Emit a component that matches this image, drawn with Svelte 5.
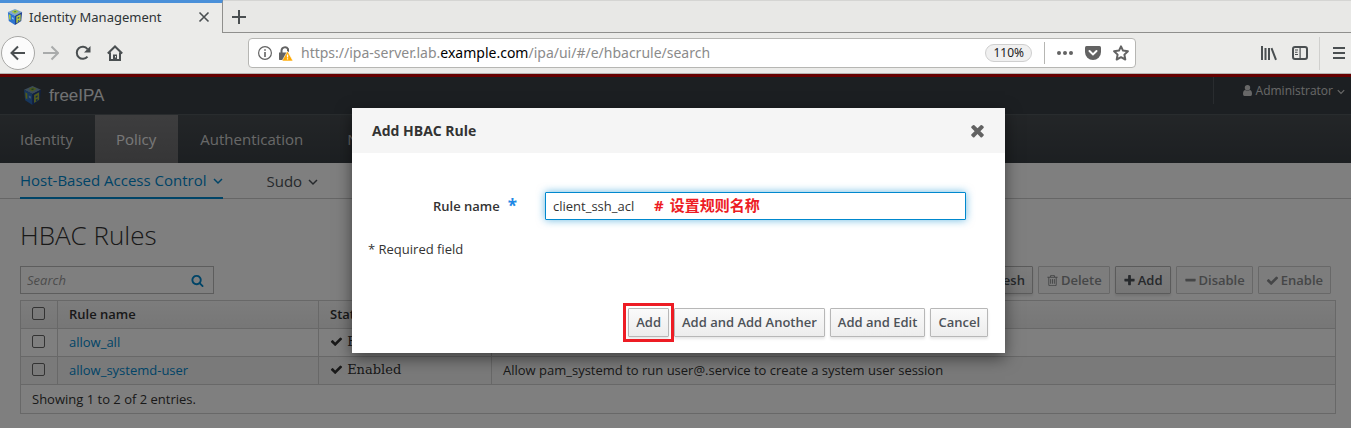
<script>
  const paths = {
    check: 'M1671 566q0 40-28 68l-724 724-136 136q-28 28-68 28t-68-28l-136-136-362-362q-28-28-28-68t28-68l136-136q28-28 68-28t68 28l294 295 656-657q28-28 68-28t68 28l136 136q28 28 28 68z',
    times: 'M1490 1322q0 40-28 68l-136 136q-28 28-68 28t-68-28l-294-294-294 294q-28 28-68 28t-68-28l-136-136q-28-28-28-68t28-68l294-294-294-294q-28-28-28-68t28-68l136-136q28-28 68-28t68 28l294 294 294-294q28-28 68-28t68 28l136 136q28 28 28 68t-28 68l-294 294 294 294q28 28 28 68z',
    plus: 'M1600 736v192q0 40-28 68t-68 28h-416v416q0 40-28 68t-68 28h-192q-40 0-68-28t-28-68v-416h-416q-40 0-68-28t-28-68v-192q0-40 28-68t68-28h416v-416q0-40 28-68t68-28h192q40 0 68 28t28 68v416h416q40 0 68 28t28 68z',
    minus: 'M1600 736v192q0 40-28 68t-68 28h-1216q-40 0-68-28t-28-68v-192q0-40 28-68t68-28h1216q40 0 68 28t28 68z',
    trash: 'M704 736v576q0 14-9 23t-23 9h-64q-14 0-23-9t-9-23v-576q0-14 9-23t23-9h64q14 0 23 9t9 23zm256 0v576q0 14-9 23t-23 9h-64q-14 0-23-9t-9-23v-576q0-14 9-23t23-9h64q14 0 23 9t9 23zm256 0v576q0 14-9 23t-23 9h-64q-14 0-23-9t-9-23v-576q0-14 9-23t23-9h64q14 0 23 9t9 23zm128 724v-948h-896v948q0 22 7 40.5t14.5 27 10.5 8.5h832q3 0 10.5-8.5t14.5-27 7-40.5zm-672-1076h448l-48-117q-7-9-17-11h-317q-10 2-17 11zm928 32v64q0 14-9 23t-23 9h-96v948q0 83-47 143.5t-113 60.5h-832q-66 0-113-58.5t-47-141.5v-952h-96q-14 0-23-9t-9-23v-64q0-14 9-23t23-9h309l70-167q15-37 54-63t79-26h320q40 0 79 26t54 63l70 167h309q14 0 23 9t9 23z',
    search: 'M1216 832q0-185-131.5-316.5t-316.5-131.5-316.5 131.5-131.5 316.5 131.5 316.5 316.5 131.5 316.5-131.5 131.5-316.5zm512 832q0 52-38 90t-90 38q-54 0-90-38l-343-342q-179 124-399 124-143 0-273.5-55.5t-225-150-150-225-55.5-273.5 55.5-273.5 150-225 225-150 273.5-55.5 273.5 55.5 225 150 150 225 55.5 273.5q0 220-124 399l343 343q37 37 37 90z'
  };

  const tabs = [
    { label: 'Identity' },
    { label: 'Policy', active: true },
    { label: 'Authentication' },
    { label: 'Network Services' }
  ];

  const actions = [
    { label: 'Refresh' },
    { label: 'Delete', icon: 'trash', disabled: true },
    { label: 'Add', icon: 'plus' },
    { label: 'Disable', icon: 'minus', disabled: true },
    { label: 'Enable', icon: 'check', disabled: true }
  ];

  const rules = [
    { name: 'allow_all', description: 'Allow all users to access any host from any host' },
    {
      name: 'allow_systemd-user',
      description: 'Allow pam_systemd to run user@.service to create a system user session'
    }
  ];

  let ruleName = $state('client_ssh_acl');
</script>

{#snippet icon(name)}
  <svg class="fa" viewBox="0 0 1792 1792" aria-hidden="true"><path d={paths[name]} /></svg>
{/snippet}

{#snippet chevron()}
  <svg class="chevron" viewBox="0 0 10 10" aria-hidden="true"><path d="M1 4l4 4 4-4" /></svg>
{/snippet}

{#snippet cube()}
  <svg class="cube" viewBox="0 0 18 18" aria-hidden="true">
    <path d="M9 0l8 3.500-8 4-8-4z" fill="#7fa6c9" />
    <path d="M1 3.500l8 4V18l-7-4.500z" fill="#2d74cf" />
    <path d="M17 3.500l-8 4V18l7-4.500z" fill="#1c3f94" />
    <path d="M5.500 2.600l4-1.400 3.500 1.500-4 2.600-2.200-1z" fill="#a9c93a" />
    <path d="M7.500 2.900l2-.6 1.200.6-1.900 1.100z" fill="#3a7a60" />
    <path d="M2.200 6l1.900 1v5.500l-1.500-.9z" fill="#b9cf2e" />
    <path d="M5.500 9l2 1v2l-2-1z" fill="#8cc1ee" />
    <path d="M10.500 8.500l4.800-2.500v7L10.500 16z" fill="#b5cc3c" />
    <path d="M12 9.700l1.800-.9v1.600l-1.800.9zM12.200 12.900l1.600-.8v1.700l-1.600.8z" fill="#24509e" />
  </svg>
{/snippet}

<div class="browser">
  <div class="tabstrip">
    <div class="tab">
      {@render cube()}
      <span class="tab-title">Identity Management</span>
      <button class="plain" aria-label="Close tab">
        <svg width="12" height="12" viewBox="0 0 12 12"><path class="line thin" d="M1.500 1.500l9 9M10.500 1.500l-9 9" /></svg>
      </button>
    </div>
    <div class="strip-rest">
      <button class="plain" aria-label="New tab">
        <svg width="14" height="14" viewBox="0 0 14 14"><path class="line" d="M7 0v14M0 7h14" /></svg>
      </button>
    </div>
  </div>

  <div class="toolbar">
    <div class="nav-buttons">
      <button class="plain back" aria-label="Back">
        <svg width="16" height="16" viewBox="0 0 16 16"><path class="line" d="M15 8H1.500M8 1.500L1.500 8 8 14.500" /></svg>
      </button>
      <button class="plain faded" aria-label="Forward">
        <svg width="16" height="16" viewBox="0 0 16 16"><path class="line" d="M0 8h14.500M8.500 1.500L15 8l-6.500 6.500" /></svg>
      </button>
      <button class="plain" aria-label="Reload">
        <svg width="16" height="16" viewBox="0 0 16 16">
          <path class="line" d="M12.500 11.500A6 6 0 1 1 12.500 4" />
          <path d="M15.500 1v6.500H9z" />
        </svg>
      </button>
      <button class="plain" aria-label="Home">
        <svg width="16" height="16" viewBox="0 0 16 16">
          <path class="line" d="M.8 8.500L8 1.500l7.200 7M3 7.500V15h10V7.500" />
          <path d="M6 9.500h4V15H6z" />
          <path d="M8 11h1v1.500H8z" fill="#ebebe9" />
        </svg>
      </button>
    </div>

    <div class="urlbar">
      <svg width="14" height="14" viewBox="0 0 14 14" aria-hidden="true">
        <circle cx="7" cy="7" r="6.400" fill="none" stroke="#636363" stroke-width="1.200" />
        <path d="M6.200 6h1.600v5H6.200zM6.200 3.200h1.600v1.600H6.200z" />
      </svg>
      <svg class="lock" width="15" height="15" viewBox="0 0 15 15" aria-hidden="true">
        <path d="M3.500 7V4.500a3.500 3.500 0 0 1 6.500-1.500V6" fill="none" stroke="#636363" stroke-width="2" />
        <path d="M1 6.500h9V14H1.500L1 13.500z" />
        <path d="M9.500 5L15 15H4z" fill="#ffa900" stroke="#fff" stroke-width=".6" />
        <path d="M8.900 8.500h1.300v3H8.900zM8.900 12.300h1.300v1.300H8.900z" fill="#fff" />
      </svg>
      <div class="address" role="textbox" tabindex="0" aria-label="Address" contenteditable="true">https://ipa-server.lab.<b>example.com</b>/ipa/ui/#/e/hbacrule/search</div>
      <button class="zoom">110%</button>
      <span class="divider"></span>
      <button class="plain grey" aria-label="Page actions">
        <svg width="16" height="16" viewBox="0 0 16 16"><circle cx="2" cy="8" r="2" /><circle cx="8" cy="8" r="2" /><circle cx="14" cy="8" r="2" /></svg>
      </button>
      <button class="plain grey" aria-label="Save to Pocket">
        <svg width="16" height="16" viewBox="0 0 16 16">
          <path d="M1.500 1h13Q16 1 16 2.500V7a8 8 0 0 1-16 0V2.500Q0 1 1.500 1z" />
          <path d="M4.500 6L8 9.400 11.500 6" fill="none" stroke="#fff" stroke-width="2" stroke-linecap="round" />
        </svg>
      </button>
      <button class="plain grey" aria-label="Bookmark">
        <svg width="16" height="16" viewBox="0 0 16 16"><path class="line" d="M8 1.300l2 4.300 4.900.6-3.500 3.400.9 4.900L8 12.200l-4.300 2.300.9-4.900L1.100 6.200 6 5.600z" stroke-linejoin="round" /></svg>
      </button>
    </div>

    <div class="tools">
      <button class="plain" aria-label="Library">
        <svg width="16" height="16" viewBox="0 0 16 16"><path class="line" d="M1 1v14M4.500 3v12M8 3v12M10.500 3.200L15 14.800" /></svg>
      </button>
      <button class="plain" aria-label="Sidebars">
        <svg width="16" height="16" viewBox="0 0 16 16">
          <rect class="line" x="1" y="2" width="14" height="12" rx="2" />
          <path d="M7.500 2h1.200v12H7.500zM3 4.500h3v1H3zM3 6.800h2.500v1H3zM3 9h3v1H3z" />
        </svg>
      </button>
      <span class="divider tall"></span>
      <button class="plain" aria-label="Menu">
        <svg width="12" height="12" viewBox="0 0 12 12"><path class="line" d="M0 1h12M0 6h12M0 11h12" /></svg>
      </button>
    </div>
  </div>

  <div class="page">
    <header>
      <a class="brand" href="#/">{@render cube()}<span>freeIPA</span></a>
      <button class="plain user">
        <svg width="9" height="11" viewBox="0 0 9 11" aria-hidden="true"><circle cx="4.500" cy="2.700" r="2.700" /><path d="M2 5q2.500 1.600 5 0 2 .6 2 4 0 2-1.500 2h-6Q0 11 0 9q0-3.400 2-4z" /></svg>
        <span>Administrator</span>
        {@render chevron()}
      </button>
    </header>

    <nav class="primary">
      {#each tabs as tab}
        <a href="#/" class:active={tab.active}>{tab.label}</a>
      {/each}
    </nav>

    <nav class="secondary">
      <a href="#/" class="active">Host-Based Access Control {@render chevron()}</a>
      <a href="#/">Sudo {@render chevron()}</a>
    </nav>

    <main>
      <h1>HBAC Rules</h1>
      <div class="controls">
        <div class="search">
          <input type="text" placeholder="Search" aria-label="Search" />
          <button class="plain" aria-label="Find">{@render icon('search')}</button>
        </div>
        <div class="actions">
          {#each actions as action}
            <button class="btn" disabled={action.disabled}>
              {#if action.icon}{@render icon(action.icon)}{/if}<span>{action.label}</span>
            </button>
          {/each}
        </div>
      </div>

      <table>
        <thead>
          <tr>
            <th class="pick"><input type="checkbox" aria-label="Select all" /></th>
            <th class="name">Rule name</th>
            <th class="status">Status</th>
            <th>Description</th>
          </tr>
        </thead>
        <tbody>
          {#each rules as rule}
            <tr>
              <td><input type="checkbox" aria-label={rule.name} /></td>
              <td><a href="#/">{rule.name}</a></td>
              <td class="enabled">{@render icon('check')} Enabled</td>
              <td>{rule.description}</td>
            </tr>
          {/each}
        </tbody>
        <tfoot>
          <tr><td colspan="4">Showing 1 to 2 of 2 entries.</td></tr>
        </tfoot>
      </table>
    </main>

    <div class="backdrop">
      <div class="modal" role="dialog" aria-labelledby="dialog-title">
        <div class="modal-header">
          <h2 id="dialog-title">Add HBAC Rule</h2>
          <button class="plain close" aria-label="Close">{@render icon('times')}</button>
        </div>
        <div class="modal-body">
          <div class="field">
            <label for="rule-name">Rule name <span class="star">*</span></label>
            <div class="entry">
              <input id="rule-name" type="text" bind:value={ruleName} />
              <span class="note"><span>#</span><span>设置规则名称</span></span>
            </div>
          </div>
          <p>* Required field</p>
        </div>
        <div class="modal-footer">
          <button class="btn marked">Add</button>
          <button class="btn">Add and Add Another</button>
          <button class="btn">Add and Edit</button>
          <button class="btn">Cancel</button>
        </div>
      </div>
    </div>
  </div>
</div>

<style>
  :global(body) { background: #808080; }
  * { box-sizing: border-box; }

  .browser {
    display: flex;
    flex-direction: column;
    min-height: 100vh;
    font: 13px/18px "Open Sans", "Noto Sans CJK SC", sans-serif;
    color: #333;
  }
  svg { display: block; flex: none; }
  a { text-decoration: none; }
  button, input { font: inherit; color: inherit; margin: 0; }
  .plain {
    display: flex;
    align-items: center;
    justify-content: center;
    border: 0;
    padding: 0;
    background: none;
    fill: #4a4f51;
    stroke: none;
  }
  .line { fill: none; stroke: #4a4f51; stroke-width: 2; }
  .thin { stroke-width: 1.6; }
  .fa { width: 13px; height: 13px; fill: currentColor; }
  .chevron { width: 10px; height: 10px; fill: none; stroke: currentColor; stroke-width: 1.5; }

  /* Browser chrome */
  .tabstrip { display: flex; height: 33px; font: 13px/20px "Noto Sans", sans-serif; color: #2e3436; }
  .tab {
    display: flex;
    align-items: center;
    width: 223px;
    padding: 0 12px 2px 7px;
    border-top: 3px solid #4a90d9;
    border-right: 1px solid #8f8f8d;
    background: #ebebe9;
  }
  .tab .cube { width: 16px; height: 16px; }
  .tab-title { flex: 1; padding-left: 6px; white-space: nowrap; }
  .strip-rest {
    display: flex;
    flex: 1;
    padding-left: 9px;
    border-top: 1px solid #d5d5d3;
    border-bottom: 1px solid #8f8f8d;
    background: #e8e8e6;
  }
  .toolbar {
    display: flex;
    align-items: center;
    height: 41px;
    padding: 0 6px 0 1px;
    border-bottom: 1px solid #b4b4b2;
    background: #ebebe9;
  }
  .nav-buttons { display: flex; align-items: center; gap: 16px; }
  .back {
    width: 34px;
    height: 34px;
    margin-right: -8px;
    border: 1px solid #a8a8a6;
    border-radius: 50%;
    background: #fbfbfb;
  }
  .faded .line { stroke: #a9abab; }
  .urlbar {
    display: flex;
    flex: 1;
    align-items: center;
    height: 30px;
    margin: 0 9.3%;
    padding: 0 6px 0 9px;
    border: 1px solid #b6b6b3;
    border-radius: 4px;
    background: #fff;
    fill: #636363;
    font: 14px/20px "Noto Sans", sans-serif;
    color: #8b8b8b;
  }
  .lock { margin: 0 8px 0 6px; }
  .address { flex: 1; white-space: nowrap; overflow: hidden; }
  .address b { font-weight: 400; color: #000; }
  .zoom {
    height: 18px;
    padding: 0 7px;
    border: 1px solid #cfcfcf;
    border-radius: 9px;
    background: #f0f0f0;
    font-size: 12px;
    line-height: 16px;
    color: #222;
  }
  .divider { width: 1px; height: 22px; margin: 0 0 0 12px; background: #b6b6b3; }
  .grey { margin-left: 12px; fill: #636363; }
  .grey .line { stroke: #636363; }
  .tools { display: flex; align-items: center; gap: 15px; }
  .divider.tall { height: 33px; margin: 0 -2px 0 -4px; background: #d0d0ce; }

  /* Page */
  .page {
    position: relative;
    flex: 1;
    border-top: 3px solid #c00;
    background: #fff;
  }
  header { display: flex; align-items: flex-start; justify-content: space-between; height: 37px; background: #393f44; }
  .brand {
    display: flex;
    align-items: center;
    gap: 7px;
    height: 37px;
    padding-left: 23px;
    font: 17px/20px "Liberation Sans", sans-serif;
    color: #e2e4e6;
  }
  .brand .cube { width: 19px; height: 19px; opacity: .85; }
  .user { gap: 4px; height: 27px; padding: 0 6px 0 29px; border-left: 1px solid #53595e; color: #d1d1d1; fill: #d1d1d1; font-size: 12px; }
  .user .chevron { width: 8px; height: 8px; }
  .primary { display: flex; height: 49px; border-top: 1px solid #53585c; background: linear-gradient(#474c50, #393f44); font-size: 15px; }
  .primary a { padding: 0 22px; line-height: 49px; white-space: nowrap; color: #d1d1d1; }
  .primary a:first-child { padding-left: 20px; }
  .primary .active { padding-left: 21px; background: linear-gradient(#7b7b7d, #6c6c6e); color: #f1f1f1; }
  .secondary { display: flex; gap: 44px; height: 36px; padding: 0 20px; border-bottom: 1px solid #ccc; background: #fff; font-size: 15px; }
  .secondary a { display: flex; align-items: center; gap: 6px; height: 36px; color: #4d5258; }
  .secondary .active { border-bottom: 2px solid #0088ce; color: #0088ce; }
  main { padding: 19px 15px 14px 20px; }
  h1 { margin: 0 0 14px; font-size: 26px; line-height: 34px; font-weight: 300; }
  .controls { display: flex; justify-content: space-between; margin-bottom: 6px; }
  .search { display: flex; width: 194px; height: 28px; padding: 0 9px 0 6px; border: 1px solid #bbb; }
  .search input { flex: 1; min-width: 0; padding: 0; border: 0; background: none; outline: 0; }
  .search input::placeholder { font-style: italic; color: #999; opacity: 1; }
  .search button { color: #0088ce; }
  .actions { display: flex; gap: 5px; padding-right: 5px; }
  .btn {
    display: flex;
    align-items: center;
    gap: 2px;
    height: 28px;
    padding: 0 7px;
    border: 1px solid #b7b7b7;
    border-radius: 1px;
    background: linear-gradient(#fafafa, #ededed);
    box-shadow: 0 2px 3px rgba(3, 3, 3, .1);
    font-weight: 600;
    white-space: nowrap;
    color: #4d5258;
  }
  .btn:disabled { border-color: #d1d1d1; background: #fafafa; box-shadow: none; color: #8b8d8f; }

  table { width: 100%; border-collapse: collapse; table-layout: fixed; }
  th, td { height: 28px; padding: 0 11px 2px; border: 1px solid #d1d1d1; text-align: left; }
  th { font-weight: 600; }
  thead { background: linear-gradient(#fafafa, #ededed); }
  .pick { width: 37px; }
  .name { width: 261px; }
  .status { width: 173px; }
  tbody tr:nth-child(2) { background: #f5f5f5; }
  td a { color: #0088ce; }
  .enabled { font-family: "DejaVu Serif", serif; }
  .enabled .fa { display: inline-block; vertical-align: -2px; }
  tfoot td { height: 29px; padding-bottom: 0; }
  input[type='checkbox'] {
    display: block;
    width: 13px;
    height: 13px;
    appearance: none;
    border: 1px solid #666;
    border-radius: 2px;
  }

  /* Dialog */
  .backdrop {
    position: absolute;
    inset: -3px 0 0;
    display: flex;
    align-items: flex-start;
    justify-content: center;
    padding: 34px 0 0 6px;
    background: rgba(0, 0, 0, .5);
  }
  .modal { width: 653px; background: #fff; box-shadow: 0 5px 15px rgba(0, 0, 0, .5); }
  .modal-header { display: flex; align-items: center; justify-content: space-between; height: 45px; padding: 0 18px 0 20px; background: #f5f5f5; }
  h2 { margin: 0; font-size: 14px; line-height: 20px; font-weight: 700; }
  .close { color: #626262; }
  .close .fa { width: 19px; height: 19px; }
  .modal-body { padding: 39px 39px 0 16px; }
  .field { display: flex; align-items: center; gap: 28px; }
  .field label { display: flex; flex: 1; justify-content: flex-end; gap: 8px; font-weight: 600; }
  .star { font-size: 17px; font-weight: 700; color: #1e88e5; }
  .entry { position: relative; width: 421px; }
  .entry input {
    display: block;
    width: 100%;
    height: 28px;
    padding: 0 7px;
    border: 1px solid #0088ce;
    border-radius: 1px;
    outline: 0;
    box-shadow: 0 0 8px rgba(0, 136, 206, .6);
  }
  .note {
    position: absolute;
    top: 4px;
    left: 109px;
    display: flex;
    gap: 6px;
    font-size: 15px;
    font-weight: 700;
    color: #ed1c24;
    pointer-events: none;
  }
  p { margin: 20px 0 0; }
  .modal-footer { display: flex; justify-content: flex-end; gap: 5px; padding: 50px 17px 16px; }
  .modal-footer .btn { height: 29px; padding-bottom: 2px; }
  .marked { position: relative; }
  .marked::after { content: ''; position: absolute; inset: -6px; border: 3px solid #ed1c24; }
</style>
